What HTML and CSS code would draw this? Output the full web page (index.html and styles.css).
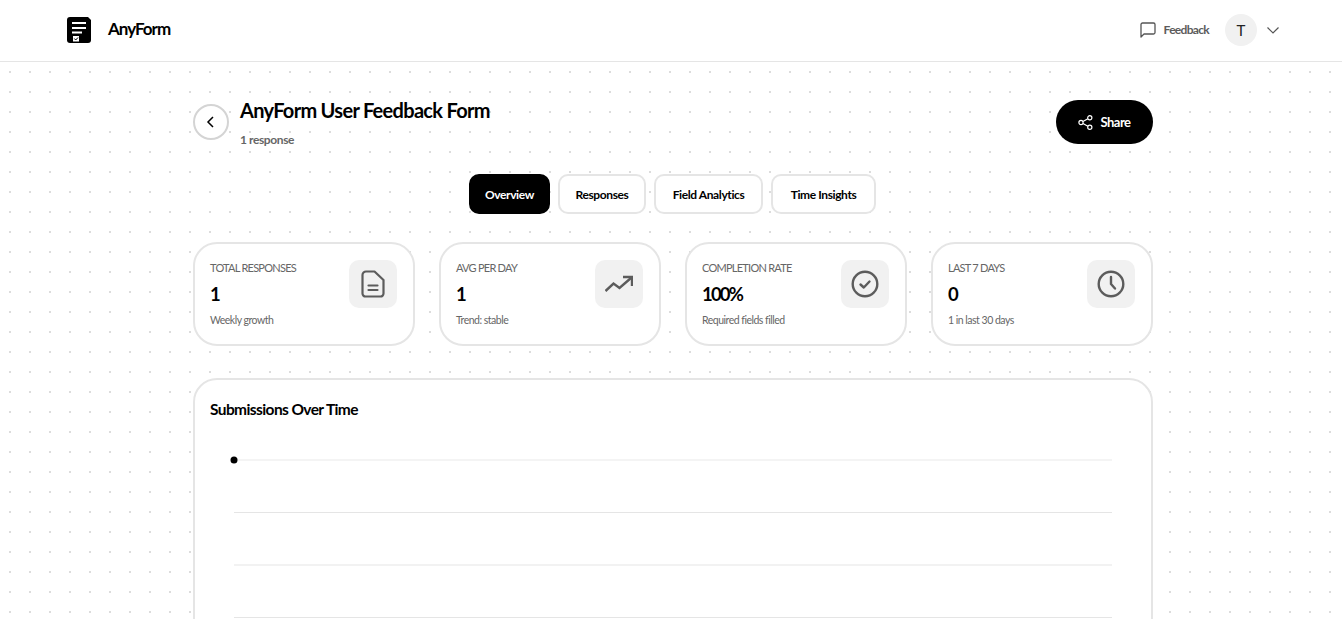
FILE: index.html
```html
<!DOCTYPE html>
<html lang="en">
<head>
    <meta charset="UTF-8">
    <meta name="viewport" content="width=device-width, initial-scale=1.0">
    <title>AnyForm User Feedback Form</title>
    <link rel="stylesheet" href="styles.css">
</head>
<body>
    <header class="topbar">
        <div class="brand">
            <svg class="brand-icon" width="24" height="26" viewBox="0 0 24 26">
                <path d="M3 0H21L24 3V23A3 3 0 0 1 21 26H3A3 3 0 0 1 0 23V3A3 3 0 0 1 3 0Z" fill="#000"/>
                <path d="M5 6H19M5 11H19M5 15.500H15" stroke="#fff" stroke-width="2" fill="none"/>
                <rect x="6" y="19" width="6" height="5.500" fill="#fff"/>
                <path d="M7.300 21.500L8.700 23L11 20.500" stroke="#000" stroke-width="1" fill="none"/>
            </svg>
            <span class="brand-name">AnyForm</span>
        </div>
        <div class="topbar-right">
            <a class="feedback-link">
                <svg width="16" height="16" viewBox="0 0 16 16" fill="none" stroke="#555" stroke-width="1.300">
                    <path d="M1 15V2.500A1.500 1.500 0 0 1 2.500 1H13.500A1.500 1.500 0 0 1 15 2.500V10.500A1.500 1.500 0 0 1 13.500 12H4Z" stroke-linejoin="round"/>
                </svg>
                <span>Feedback</span>
            </a>
            <div class="avatar">T</div>
            <svg width="14" height="14" viewBox="0 0 14 14" fill="none" stroke="#555" stroke-width="1.200">
                <path d="M1.500 4.500L7 10L12.500 4.500"/>
            </svg>
        </div>
    </header>

    <main class="page">
        <div class="container">
            <div class="page-head">
                <div class="head-left">
                    <button class="back-button">
                        <svg width="14" height="14" viewBox="0 0 14 14" fill="none" stroke="#000" stroke-width="1.500">
                            <path d="M9 2L4 7L9 12"/>
                        </svg>
                    </button>
                    <div class="head-text">
                        <h1>AnyForm User Feedback Form</h1>
                        <p>1 response</p>
                    </div>
                </div>
                <button class="share-button">
                    <svg width="15" height="15" viewBox="0 0 15 15" fill="none" stroke="#fff" stroke-width="1.200">
                        <circle cx="11.800" cy="2.800" r="2.100"/>
                        <circle cx="3" cy="7.500" r="2.100"/>
                        <circle cx="11.800" cy="12.200" r="2.100"/>
                        <path d="M4.900 6.500L9.900 3.800M4.900 8.500L9.900 11.200"/>
                    </svg>
                    <span>Share</span>
                </button>
            </div>

            <nav class="tabs">
                <button class="tab active">Overview</button>
                <button class="tab">Responses</button>
                <button class="tab">Field Analytics</button>
                <button class="tab">Time Insights</button>
            </nav>

            <section class="stats">
                <div class="stat-card">
                    <div class="stat-text">
                        <div class="stat-label">TOTAL RESPONSES</div>
                        <div class="stat-value">1</div>
                        <div class="stat-note">Weekly growth</div>
                    </div>
                    <div class="stat-icon">
                        <svg width="28" height="28" viewBox="0 0 28 28" fill="none" stroke="#5c5c5c" stroke-width="2.200" stroke-linejoin="round" stroke-linecap="round">
                            <path d="M7 1.500H15.500L24.500 10V23.500A3 3 0 0 1 21.500 26.500H6.500A3 3 0 0 1 3.500 23.500V5A3.500 3.500 0 0 1 7 1.500Z"/>
                            <path d="M9.500 15.500H18.500M9.500 20H18.500"/>
                        </svg>
                    </div>
                </div>
                <div class="stat-card">
                    <div class="stat-text">
                        <div class="stat-label">AVG PER DAY</div>
                        <div class="stat-value">1</div>
                        <div class="stat-note">Trend: stable</div>
                    </div>
                    <div class="stat-icon">
                        <svg width="28" height="28" viewBox="0 0 28 28" fill="none" stroke="#5c5c5c" stroke-width="2.400">
                            <path d="M0.500 21L8.500 13.500L14.500 18L26 8"/>
                            <path d="M18 7H27V16"/>
                        </svg>
                    </div>
                </div>
                <div class="stat-card">
                    <div class="stat-text">
                        <div class="stat-label">COMPLETION RATE</div>
                        <div class="stat-value">100%</div>
                        <div class="stat-note">Required fields filled</div>
                    </div>
                    <div class="stat-icon">
                        <svg width="28" height="28" viewBox="0 0 28 28" fill="none" stroke="#5c5c5c" stroke-width="2.400">
                            <circle cx="14" cy="14" r="12.300"/>
                            <path d="M9.500 14.500L12.800 17.500L18.500 11.500" stroke-linecap="round" stroke-linejoin="round"/>
                        </svg>
                    </div>
                </div>
                <div class="stat-card">
                    <div class="stat-text">
                        <div class="stat-label">LAST 7 DAYS</div>
                        <div class="stat-value">0</div>
                        <div class="stat-note">1 in last 30 days</div>
                    </div>
                    <div class="stat-icon">
                        <svg width="28" height="28" viewBox="0 0 28 28" fill="none" stroke="#5c5c5c" stroke-width="2.400">
                            <circle cx="14" cy="14" r="12.300"/>
                            <path d="M14 7V14L18 18.500" stroke-linecap="round" stroke-linejoin="round"/>
                        </svg>
                    </div>
                </div>
            </section>

            <section class="chart-card">
                <h2>Submissions Over Time</h2>
                <svg class="chart" width="924" height="240" viewBox="0 0 924 240">
                    <path d="M23 21H901" stroke="#f0f0f0" stroke-width="1.500"/>
                    <path d="M23 73.500H901M23 126H901M23 178.500H901" stroke="#e5e5e5" stroke-width="1"/>
                    <circle cx="23" cy="21" r="3.500" fill="#000"/>
                </svg>
            </section>
        </div>
    </main>
</body>
</html>
```

FILE: styles.css
```css
* {
    margin: 0;
    padding: 0;
    box-sizing: border-box;
}

html, body {
    height: 100%;
    overflow: hidden;
}

body {
    font-family: 'Lato', sans-serif;
    background: white;
    color: #000;
    display: flex;
    flex-direction: column;
}

button {
    font-family: inherit;
    cursor: pointer;
}

.topbar {
    height: 62px;
    flex-shrink: 0;
    border-bottom: 1px solid #e5e5e5;
    background: white;
    display: flex;
    align-items: center;
    justify-content: space-between;
    padding: 0 62px 2px 67px;
}

.brand {
    display: flex;
    align-items: center;
    gap: 17px;
}

.brand-icon {
    display: block;
}

.brand-name {
    font-size: 17px;
    font-weight: 700;
    letter-spacing: -1px;
    margin-bottom: 2px;
}

.topbar-right {
    display: flex;
    align-items: center;
}

.feedback-link {
    display: flex;
    align-items: center;
    gap: 8px;
    font-size: 12px;
    font-weight: 700;
    letter-spacing: -0.7px;
    color: #5c5c5c;
    margin-right: 16px;
}

.avatar {
    width: 32px;
    height: 32px;
    border-radius: 50%;
    background: #f1f1f1;
    display: flex;
    align-items: center;
    justify-content: center;
    font-size: 15px;
    color: #222;
    margin-right: 9px;
}

.page {
    flex: 1;
    overflow: hidden;
    padding-left: 4px;
    background-color: white;
    background-image: radial-gradient(circle, #dcdcdc 1px, transparent 1px);
    background-size: 20px 20px;
}

.container {
    width: 960px;
    margin: 0 auto;
    padding-top: 38px;
}

.page-head {
    display: flex;
    justify-content: space-between;
    align-items: flex-start;
    margin-bottom: 25px;
}

.head-left {
    display: flex;
    align-items: flex-start;
    gap: 11px;
}

.back-button {
    width: 36px;
    height: 36px;
    margin-top: 4px;
    border-radius: 50%;
    border: 2px solid #d4d4d4;
    background: white;
    display: flex;
    align-items: center;
    justify-content: center;
}

.head-text h1 {
    font-size: 20px;
    line-height: 20px;
    font-weight: 700;
    letter-spacing: -0.7px;
}

.head-text p {
    margin-top: 11px;
    font-size: 12px;
    line-height: 18px;
    font-weight: 700;
    letter-spacing: -0.4px;
    color: #666;
}

.share-button {
    width: 97px;
    height: 44px;
    border: none;
    border-radius: 22px;
    background: #000;
    color: white;
    font-size: 13px;
    font-weight: 700;
    letter-spacing: -0.5px;
    display: flex;
    align-items: center;
    justify-content: center;
    gap: 7px;
}

.tabs {
    display: grid;
    grid-template-columns: 81px 88px 109px 105px;
    justify-content: center;
    gap: 8px;
    margin-right: 1px;
    margin-bottom: 28px;
}

.tab {
    height: 40px;
    border: 2px solid #e5e5e5;
    border-radius: 10px;
    background: white;
    font-size: 12px;
    font-weight: 700;
    letter-spacing: -0.4px;
    color: #000;
}

.tab.active {
    background: #000;
    border-color: #000;
    color: white;
}

.stats {
    display: grid;
    grid-template-columns: repeat(4, 1fr);
    gap: 24px;
    margin-bottom: 32px;
}

.stat-card {
    height: 104px;
    padding: 16px 16px 16px 15px;
    background: white;
    border: 2px solid #e5e5e5;
    border-radius: 24px;
    display: flex;
    justify-content: space-between;
}

.stat-label {
    font-size: 11px;
    line-height: 16px;
    letter-spacing: -0.75px;
    color: #666;
}

.stat-value {
    margin-top: 6px;
    font-size: 18.500px;
    line-height: 24px;
    font-weight: 700;
    letter-spacing: -1.8px;
}

.stat-note {
    margin-top: 6px;
    font-size: 10.500px;
    line-height: 16px;
    letter-spacing: -0.5px;
    color: #666;
}

.stat-icon {
    width: 48px;
    height: 48px;
    border-radius: 10px;
    background: #f1f1f1;
    display: flex;
    align-items: center;
    justify-content: center;
}

.chart-card {
    height: 400px;
    padding: 19px 16px 16px;
    background: white;
    border: 2px solid #e5e5e5;
    border-radius: 24px;
}

.chart-card h2 {
    font-size: 15.500px;
    line-height: 20px;
    font-weight: 700;
    letter-spacing: -0.6px;
    margin-left: -1px;
    margin-bottom: 20px;
}

.chart {
    display: block;
}
```
